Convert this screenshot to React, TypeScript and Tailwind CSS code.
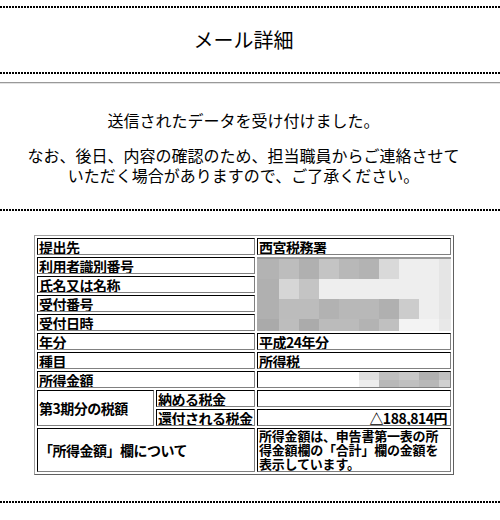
const dotted =
  "h-[2px] w-full bg-[repeating-linear-gradient(90deg,#000_0px,#000_2px,transparent_2px,transparent_3px)]";

const edge =
  "border border-t-black border-l-black border-r-[#808080] border-b-[#808080] p-0 pl-[1px] whitespace-nowrap";
const cell = edge + " h-[17px] overflow-hidden";

const bigMosaic: string[][] = [
  ["bg-[#b3b3b3]", "bg-[#bdbdbd]", "bg-[#b0b0b0]", "bg-[#c4c4c4]", "bg-[#b8b8b8]", "bg-[#b3b3b3]", "bg-[#d9d9d9]", "bg-[#eeeeee]", "bg-[#eeeeee]", "bg-[#e5e5e5]"],
  ["bg-[#b0b0b0]", "bg-[#d6d6d6]", "bg-[#c4c4c4]", "bg-[#eeeeee]", "bg-[#eeeeee]", "bg-[#eeeeee]", "bg-[#eeeeee]", "bg-[#eeeeee]", "bg-[#eeeeee]", "bg-[#e5e5e5]"],
  ["bg-[#b0b0b0]", "bg-[#bcbcbc]", "bg-[#bcbcbc]", "bg-[#b2b2b2]", "bg-[#b8b8b8]", "bg-[#b8b8b8]", "bg-[#b0b0b0]", "bg-[#cccccc]", "bg-[#eeeeee]", "bg-[#e5e5e5]"],
  ["bg-[#aaaaaa]", "bg-[#bdbdbd]", "bg-[#ababab]", "bg-[#bbbbbb]", "bg-[#bbbbbb]", "bg-[#b3b3b3]", "bg-[#c0c0c0]", "bg-[#f3f3f3]", "bg-[#f3f3f3]", "bg-[#e8e8e8]"],
];

const smallMosaic: string[][] = [
  ["bg-[#e0e0e0]", "bg-[#c0c0c0]", "bg-[#c8c8c8]", "bg-[#b0b0b0]", "bg-[#c0c0c0]"],
  ["bg-[#eeeeee]", "bg-[#b8b8b8]", "bg-[#c0c0c0]", "bg-[#b8b8b8]", "bg-[#d0d0d0]"],
];

function BigMosaic() {
  return (
    <div className="w-[194px] h-[74px] flex flex-col">
      <div className="h-[2px] bg-[#9a9a9a]" />
      <div className="grid grid-cols-[22px_repeat(8,20px)_12px] grid-rows-[20px_20px_20px_12px]">
        {bigMosaic.flat().map((c, i) => (
          <div key={i} className={c} />
        ))}
      </div>
    </div>
  );
}

function SmallMosaic() {
  return (
    <div className="flex justify-end h-[15px]">
      <div className="grid grid-cols-[20px_20px_20px_20px_11px] grid-rows-[8px_7px]">
        {smallMosaic.flat().map((c, i) => (
          <div key={i} className={c} />
        ))}
      </div>
    </div>
  );
}

export default function App() {
  return (
    <div className="w-[500px] h-[520px] bg-white text-black font-['Noto_Sans_CJK_JP','Noto_Sans_CJK_SC',sans-serif] overflow-hidden">
      <div className="pt-[6px]">
        <div className={dotted} />
      </div>
      <div className="w-[487px] h-[64px] flex items-center justify-center text-[20px]">
        メール詳細
      </div>
      <div className={dotted} />
      <div className="mt-[8px] h-[2px] border-t border-t-[#999999] border-b border-b-[#e2e2e2]" />

      <div className="w-[487px] pt-[26px] text-center text-[16px] leading-[20px]">
        <p>送信されたデータを受け付けました。</p>
        <p className="mt-[15px]">
          なお、後日、内容の確認のため、担当職員からご連絡させて
        </p>
        <p>いただく場合がありますので、ご了承ください。</p>
      </div>

      <div className="mt-[24px]">
        <div className={dotted} />
      </div>

      <div className="mt-[24px] w-[487px]">
        <table className="ml-[34px] w-[420px] table-fixed border-separate border-spacing-[2px] border border-t-[#a0a0a0] border-l-[#a0a0a0] border-r-[#606060] border-b-[#606060] text-[14px] leading-[14px] font-bold tracking-[-0.5px]">
          <colgroup>
            <col className="w-[117px]" />
            <col className="w-[99px]" />
            <col />
          </colgroup>
          <tbody>
            <tr>
              <td colSpan={2} className={cell}>提出先</td>
              <td className={cell}>西宮税務署</td>
            </tr>
            <tr>
              <td colSpan={2} className={cell}>利用者識別番号</td>
              <td rowSpan={4} className="p-0 align-top">
                <BigMosaic />
              </td>
            </tr>
            <tr>
              <td colSpan={2} className={cell}>氏名又は名称</td>
            </tr>
            <tr>
              <td colSpan={2} className={cell}>受付番号</td>
            </tr>
            <tr>
              <td colSpan={2} className={cell}>受付日時</td>
            </tr>
            <tr>
              <td colSpan={2} className={cell}>年分</td>
              <td className={cell}>平成24年分</td>
            </tr>
            <tr>
              <td colSpan={2} className={cell}>種目</td>
              <td className={cell}>所得税</td>
            </tr>
            <tr>
              <td colSpan={2} className={cell}>所得金額</td>
              <td className={cell + " pl-0"}>
                <SmallMosaic />
              </td>
            </tr>
            <tr>
              <td rowSpan={2} className={cell}>第3期分の税額</td>
              <td className={cell}>納める税金</td>
              <td className={cell}></td>
            </tr>
            <tr>
              <td className={cell}>還付される税金</td>
              <td className={cell + " text-right pr-[3px]"}>△188,814円</td>
            </tr>
            <tr>
              <td colSpan={2} className={edge + " h-[44px]"}>「所得金額」欄について</td>
              <td className={edge + " h-[44px] text-[13px] leading-[14px] tracking-[-0.2px]"}>
                <div>所得金額は、申告書第一表の所</div>
                <div>得金額欄の「合計」欄の金額を</div>
                <div>表示しています。</div>
              </td>
            </tr>
          </tbody>
        </table>
      </div>

      <div className="mt-[26px]">
        <div className={dotted} />
      </div>
    </div>
  );
}
